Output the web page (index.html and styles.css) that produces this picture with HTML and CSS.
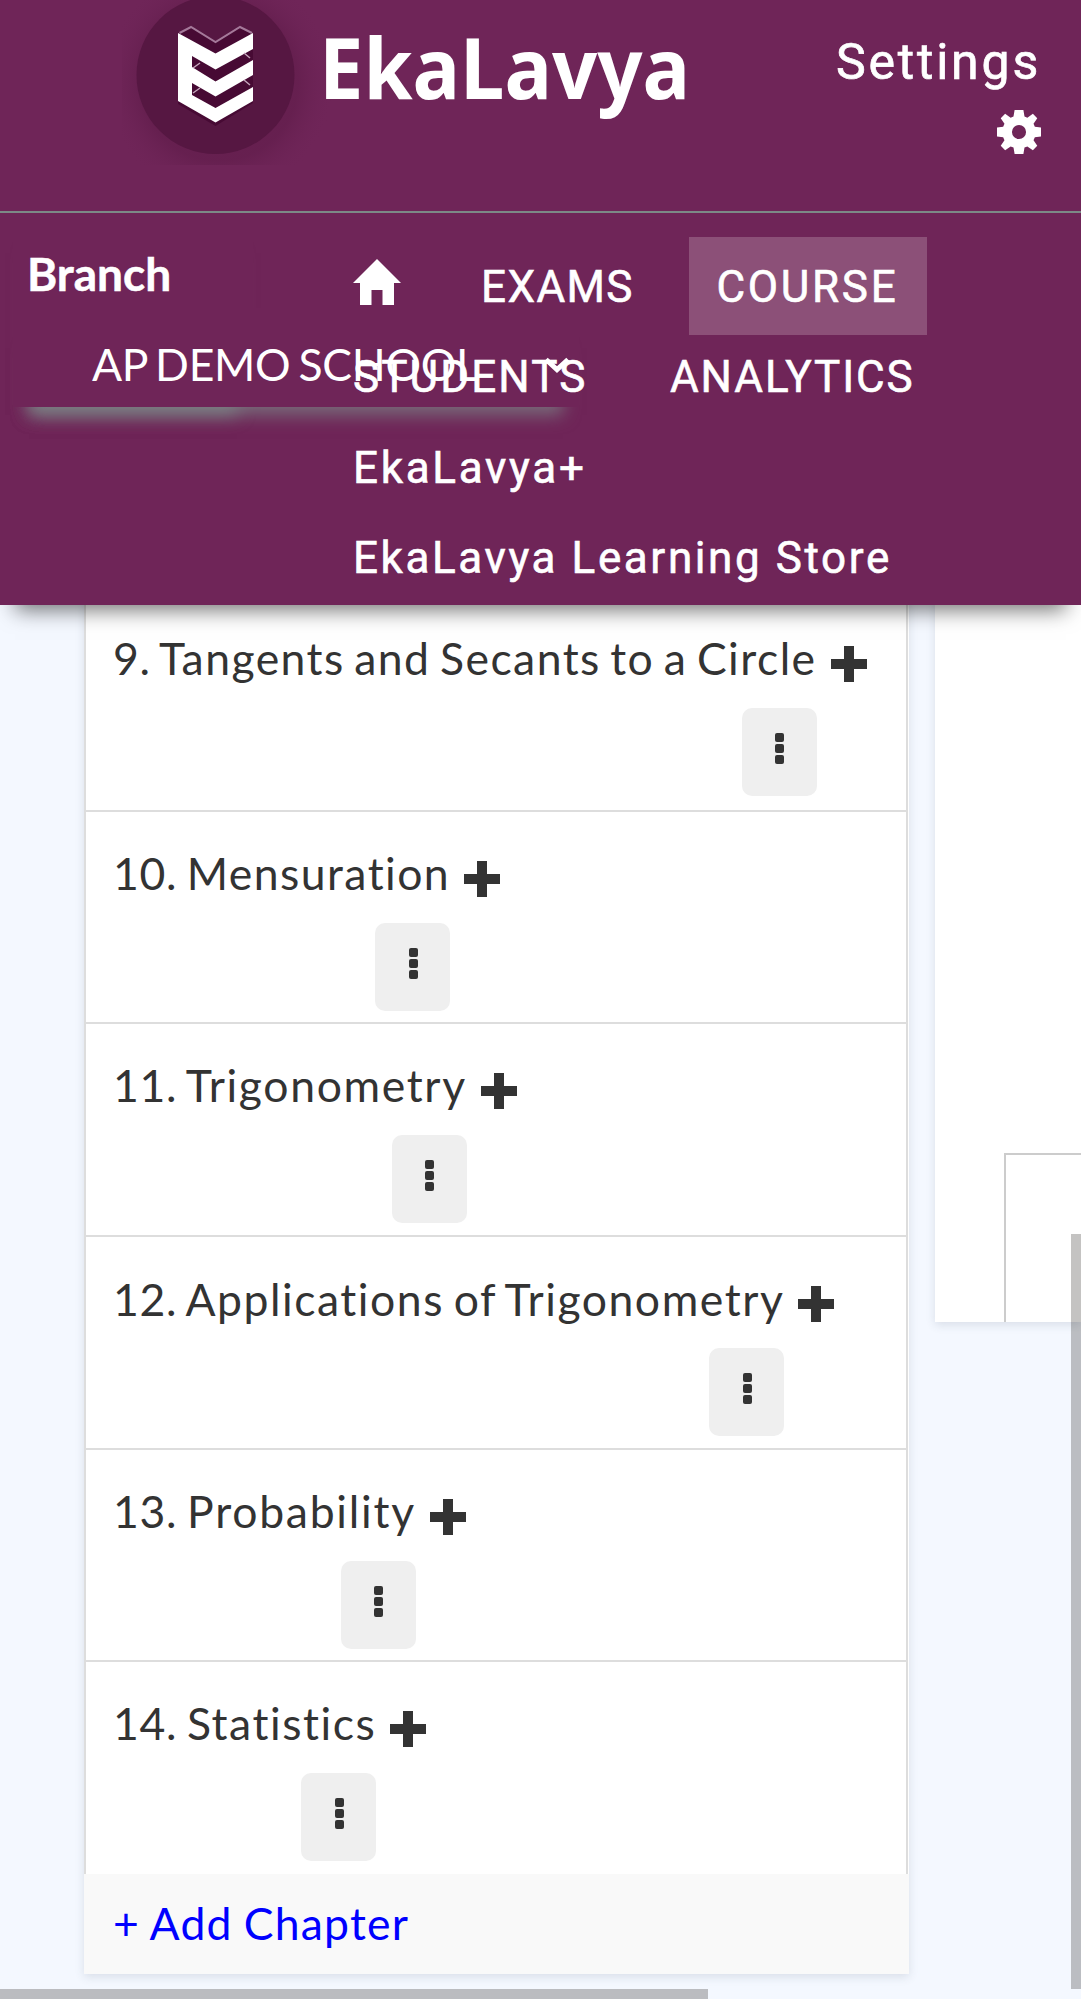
FILE: index.html
```html
<!DOCTYPE html>
<html lang="en">
<head>
<meta charset="utf-8">
<title>EkaLavya - Course</title>
<link rel="stylesheet" href="styles.css">
</head>
<body>
<header class="header">
  <div class="brand-bar">
    <svg class="logo" width="600" height="211" viewBox="100 0 600 211">
      <defs><radialGradient id="halo"><stop offset=".68" stop-color="#601c4a" stop-opacity=".6"/><stop offset="1" stop-color="#6f2558" stop-opacity="0"/></radialGradient></defs>
      <clipPath id="logo-clip"><path d="M122 0H340V165H122z"/></clipPath>
      <circle cx="219" cy="82" r="116" fill="url(#halo)" clip-path="url(#logo-clip)"/>
      <circle cx="215.500" cy="75" r="79" fill="#561742"/>
      <path d="M178 33l13-7 24.500 15 24.500-15 13 7v70l-37.500 23-37.500-22z" fill="#470a34"/>
      <path d="M179.500 33l11.500-6 24.500 15 24.500-15 12 6" fill="none" stroke="#a5799a" stroke-width="2"/>
      <path d="M178 33l37.500 20.500L253 33v16l-37.500 20.500L192 56v11l23.500 14.500L253 60v15l-37.500 21.500L192 83v12l23.500 13L253 87v14l-37.500 21.500L178 101z" fill="#fff"/>
      <path d="M193 68l7-5M193 93l7-5M244 53l6 5M244 80l6 5" stroke="#c4a5bb" stroke-width="1.500"/>
      <text class="wordmark" x="319" y="99" textLength="371" lengthAdjust="spacingAndGlyphs">EkaLavya</text>
    </svg>
    <a class="settings">Settings
      <svg width="44" height="44" viewBox="2 2 20 20"><path fill="#fff" fill-rule="evenodd" d="M10 2h4l.5 3 1.300.5L18.300 3.700l2 2L18.600 8.200l.6 1.400 2.800.4v4l-2.800.4-.6 1.400 1.700 2.500-2 2-2.500-1.700-1.300.5L14 22h-4l-.5-2.900-1.300-.5-2.500 1.700-2-2 1.700-2.500-.6-1.400L2 14v-4l2.800-.4.6-1.400L3.700 5.700l2-2 2.500 1.800 1.300-.5zM12 8.800a3.200 3.200 0 1 0 0 6.400 3.200 3.200 0 1 0 0-6.400z"/></svg>
    </a>
  </div>
  <div class="menu-bar">
    <div class="branch">
      <span class="branch-label">Branch</span>
      <div class="branch-select">AP DEMO SCHOOL
        <svg width="26" height="16" viewBox="0 0 26 16"><path d="M2 2.500l11 10 11-10" fill="none" stroke="#fff" stroke-width="5"/></svg>
      </div>
    </div>
    <nav class="nav">
      <a class="nav-item home"><svg width="48" height="46" viewBox="0 0 48 46"><path d="M24 0l24 24h-7v22H29.500V31h-11v15H7V24H0z" fill="#fff"/></svg></a>
      <a class="nav-item exams">EXAMS</a>
      <a class="nav-item course">COURSE</a>
      <a class="nav-item students">STUDENTS</a>
      <a class="nav-item analytics">ANALYTICS</a>
      <a class="nav-item plus-item">EkaLavya+</a>
      <a class="nav-item store">EkaLavya Learning Store</a>
    </nav>
  </div>
</header>
<main class="content">
  <section class="chapters">
    <div class="chapter"><span class="title"><span class="num">9.</span> Tangents and Secants to a Circle</span><i class="plus"></i><button class="more"><i></i><i></i><i></i></button></div>
    <div class="chapter"><span class="title"><span class="num">10.</span> Mensuration</span><i class="plus"></i><button class="more"><i></i><i></i><i></i></button></div>
    <div class="chapter"><span class="title"><span class="num">11.</span> Trigonometry</span><i class="plus"></i><button class="more"><i></i><i></i><i></i></button></div>
    <div class="chapter"><span class="title"><span class="num">12.</span> Applications of Trigonometry</span><i class="plus"></i><button class="more"><i></i><i></i><i></i></button></div>
    <div class="chapter"><span class="title"><span class="num">13.</span> Probability</span><i class="plus"></i><button class="more"><i></i><i></i><i></i></button></div>
    <div class="chapter"><span class="title"><span class="num">14.</span> Statistics</span><i class="plus"></i><button class="more"><i></i><i></i><i></i></button></div>
    <a class="add-chapter">+ Add Chapter</a>
  </section>
  <section class="detail"><div class="detail-frame"></div></section>
</main>
<div class="scroll-y"></div>
<div class="scroll-x"></div>
</body>
</html>
```
FILE: styles.css
```css
* { box-sizing: border-box; }
body { margin: 0; width: 1081px; height: 1999px; overflow: hidden; position: relative; background: #f4f8ff; color: #333; font-family: Lato, sans-serif; font-size: 44.5px; }
.header { position: relative; z-index: 2; height: 605px; background: #6f2558; color: #fff; box-shadow: 0 20px 20px -15px rgba(0,0,0,.55); }
.brand-bar { height: 213px; border-bottom: 2px solid #7c8987; display: flex; justify-content: space-between; padding: 0 40px 0 100px; }
.logo { flex: none; display: block; }
.wordmark { font: 700 84.5px "Noto Sans", sans-serif; fill: #fff; }
.settings { display: flex; flex-direction: column; align-items: flex-end; padding-top: 28px; font: 400 50px/68px Roboto, sans-serif; letter-spacing: 2.8px; -webkit-text-stroke: .7px #fff; }
.settings svg { margin-top: 14px; }
.menu-bar { display: grid; grid-template-columns: 353px 1fr; height: 392px; }
.branch { margin-left: 13px; width: 240px; height: 194px; padding-top: 33px; box-shadow: 0 24px 16px -16px rgba(124,137,135,.7); }
.branch-label { display: block; padding-left: 14px; font-weight: 700; font-size: 46px; line-height: 56px; height: 62px; -webkit-text-stroke: .5px #fff; }
.branch-select { width: 566px; height: 99px; padding: 29px 9px 0 79px; display: flex; justify-content: space-between; line-height: 54px; word-spacing: -3px; letter-spacing: -.3px; background: #6f2558; box-shadow: 0 24px 16px -16px rgba(124,137,135,.7); }
.branch-select svg { margin-top: 20px; }
.nav { position: relative; display: flex; flex-wrap: wrap; align-content: flex-start; padding-top: 24px; font: 400 44px/101px Roboto, sans-serif; -webkit-text-stroke: .6px #fff; }
.nav-item { height: 90.3px; }
.home { width: 128px; padding-top: 21.5px; line-height: 0; }
.exams { width: 207.5px; letter-spacing: 1.4px; }
.course { height: 98px; margin-bottom: -7.7px; width: 238px; padding-left: 28px; background: #8c5078; letter-spacing: 2.7px; }
.students { width: 317px; letter-spacing: 2.1px; }
.analytics { letter-spacing: 1.9px; }
.plus-item { width: 100%; letter-spacing: 2.7px; }
.store { width: 100%; letter-spacing: 2.6px; }
.content { display: flex; align-items: flex-start; gap: 26px; padding-left: 84px; margin-top: -8px; }
.chapters { width: 825px; flex: none; box-shadow: 0 3px 9px rgba(60,70,90,.14); background: #fff; }
.chapter { display: grid; grid-template-columns: auto auto; justify-content: start; grid-template-rows: 111px 88px; height: 212.7px; width: 824px; border: 2px solid #ddd; border-top: 0; padding-left: 27px; }
.chapter:first-child { height: 214.5px; }
.title { line-height: 54px; padding-top: 34px; letter-spacing: 1.45px; word-spacing: -3.3px; white-space: nowrap; }
.num { letter-spacing: .7px; }
.chapter:nth-child(3) .title { letter-spacing: 1.65px; }
.chapter:nth-child(4) .title { letter-spacing: 1.54px; padding-top: 35px; }
.chapter:nth-child(5) .title { letter-spacing: 1.75px; }
.chapter:nth-child(6) .title { letter-spacing: 1.55px; }
.plus { margin: 49px 0 0 14px; width: 36px; height: 36px; background: linear-gradient(#333,#333) 50%/10px 100% no-repeat, linear-gradient(#333,#333) 50%/100% 10px no-repeat; border-radius: 2px; }
.more { grid-column: 1; justify-self: end; width: 75px; height: 88px; border: 0; border-radius: 10px; background: #efefef; display: flex; flex-direction: column; align-items: center; gap: 2px; padding: 25px 0 0 1px; }
.more i { width: 9px; height: 9px; border-radius: 2px; background: #333; }
.chapter:nth-child(6) { border-bottom: 0; height: 212.2px; }
.add-chapter { display: block; height: 99.5px; background: #f9f9f9; color: #00f; padding: 22px 0 0 29px; line-height: 54px; letter-spacing: 1.2px; word-spacing: -1.5px; }
.detail { flex: 1; height: 725px; background: #fff; padding: 556px 0 0 69px; box-shadow: 0 3px 9px rgba(60,70,90,.14); }
.detail-frame { height: 169px; border: solid #ccc; border-width: 2px 0 0 2px; }
.scroll-y { position: absolute; z-index: 1; left: 1071px; top: 1234px; width: 10px; height: 755px; background: rgba(8,5,0,.24); }
.scroll-x { position: absolute; z-index: 1; left: 0; top: 1989px; width: 708px; height: 10px; background: #bbbcc0; }
```
